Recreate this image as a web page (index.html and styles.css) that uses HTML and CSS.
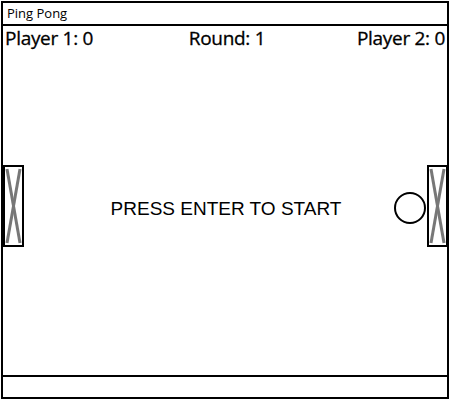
FILE: index.html
```html
<!DOCTYPE html>
<html lang="en">
<head>
  <meta charset="UTF-8" />
  <title>Ping Pong</title>
  <link rel="stylesheet" href="styles.css">
</head>
<body>
  <div class="window">
    <div class="titlebar">Ping Pong</div>

    <div class="game">
      <div class="scores">
        <span>Player 1: 0</span>
        <span class="round">Round: 1</span>
        <span>Player 2: 0</span>
      </div>

      <div class="field">
        <div class="message">PRESS ENTER TO START</div>

        <svg class="paddle paddle-left" width="21" height="82" viewBox="0 0 21 82">
          <rect x="1" y="1" width="19" height="80" fill="#fff" stroke="#000" stroke-width="2"/>
          <line x1="4" y1="4" x2="17" y2="78" stroke="#777" stroke-width="3"/>
          <line x1="17" y1="4" x2="4" y2="78" stroke="#777" stroke-width="3"/>
        </svg>

        <svg class="ball" width="32" height="32" viewBox="0 0 32 32">
          <circle cx="16" cy="16" r="15" fill="#fff" stroke="#000" stroke-width="2"/>
        </svg>

        <svg class="paddle paddle-right" width="21" height="82" viewBox="0 0 21 82">
          <rect x="1" y="1" width="19" height="80" fill="#fff" stroke="#000" stroke-width="2"/>
          <line x1="4" y1="4" x2="17" y2="78" stroke="#777" stroke-width="3"/>
          <line x1="17" y1="4" x2="4" y2="78" stroke="#777" stroke-width="3"/>
        </svg>
      </div>
    </div>

    <div class="footer"></div>
  </div>
</body>
</html>
```

FILE: styles.css
```css
html, body {
  margin: 0;
  padding: 0;
  background: #fff;
  font-family: "Open Sans", "DejaVu Sans", sans-serif;
  color: #000;
}

.window {
  margin: 1px 0 0 1px;
  width: 448px;
  height: 398px;
  box-sizing: border-box;
  border: 2px solid #000;
  display: flex;
  flex-direction: column;
}

.titlebar {
  height: 21px;
  border-bottom: 2px solid #000;
  font-size: 13px;
  line-height: 21px;
  padding-left: 4px;
}

.game {
  flex: 1;
  display: flex;
  flex-direction: column;
  border-bottom: 2px solid #000;
}

.scores {
  display: flex;
  justify-content: space-between;
  font-size: 19px;
  font-weight: 500;
  line-height: 24px;
  letter-spacing: -0.3px;
  padding: 0 2px 0 2px;
  -webkit-text-stroke: 0.3px #000;
}

.round {
  margin-left: 4px;
}

.field {
  flex: 1;
  position: relative;
  display: flex;
  align-items: center;
  justify-content: center;
}

.message {
  font-family: "Liberation Sans", Arial, sans-serif;
  font-size: 19px;
  margin-top: -8px;
  margin-left: 2px;
}

.paddle {
  position: absolute;
  top: 115px;
}

.paddle-left {
  left: 0;
}

.paddle-right {
  right: -1px;
}

.ball {
  position: absolute;
  top: 142px;
  left: 391px;
}

.footer {
  height: 20px;
}
```
